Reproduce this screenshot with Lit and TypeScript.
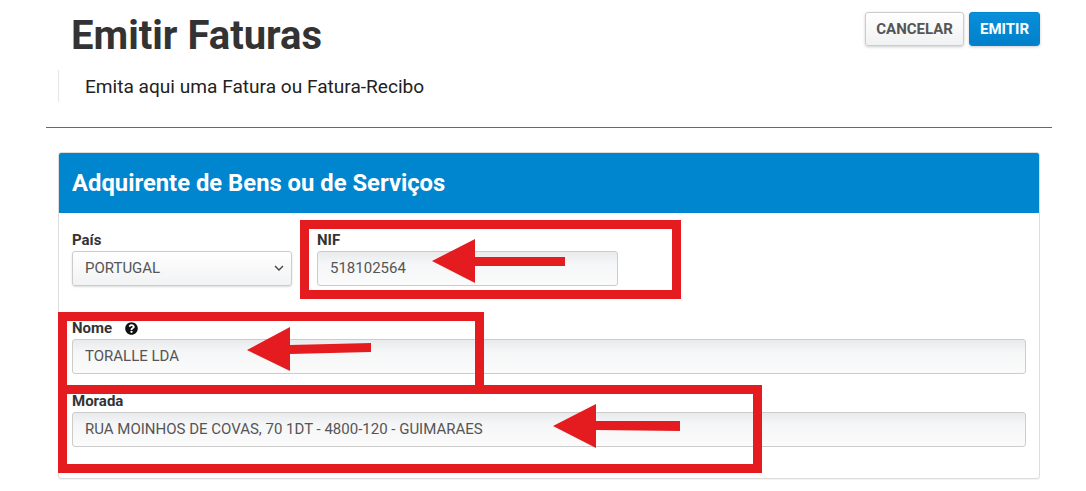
import { LitElement, html, css, svg } from "lit";
import { customElement } from "lit/decorators.js";

// red markers drawn on top of the form: [tip x, tip y, head x, head top, head bottom, tail x, tail top, tail bottom, shaft top at head]
const ARROWS = [
  [432, 261, 475, 239, 283, 565, 257, 266, 257],
  [247, 350, 290, 327, 371, 371, 343, 352, 345],
  [553, 426, 596, 404, 448, 680, 421, 431, 421],
];

@customElement("app-root")
export class AppRoot extends LitElement {
  static styles = css`
    :host {
      display: block;
      font-family: Roboto, "Liberation Sans", sans-serif;
      color: #333;
      background: #fff;
    }
    .page {
      position: relative;
      height: 491px;
      overflow: hidden;
    }
    .top {
      display: flex;
      justify-content: space-between;
      align-items: flex-start;
      padding: 12px 46px 0 71px;
    }
    h1 {
      margin: 1px 0 0;
      font-size: 40px;
      line-height: 46px;
      font-weight: 700;
      color: #333;
    }
    .actions {
      display: flex;
      gap: 5px;
    }
    .btn {
      box-sizing: border-box;
      height: 34px;
      border-radius: 3px;
      font: 700 15px/32px Roboto, "Liberation Sans", sans-serif;
      padding: 0 10px;
      border: 1px solid #ccc;
      background: linear-gradient(#fff, #f0f1f2);
      color: #555;
      box-shadow: 0 1px 3px rgba(0, 0, 0, 0.2);
    }
    .btn.primary {
      border-color: #0085cf;
      background: linear-gradient(#0a8fdb, #0080cb);
      color: #fff;
    }
    .lead {
      margin: 11px 0 0 58px;
      padding-left: 26px;
      height: 32px;
      border-left: 1px solid #e6e6e6;
      font-size: 19.1px;
      line-height: 33px;
      color: #222;
    }
    .rule {
      margin: 25px 34px 0 46px;
      height: 1px;
      background: #0f83c4;
    }
    .card {
      margin: 24px 46px 0 58px;
      border: 1px solid #ddd;
      border-radius: 3px;
      box-shadow: 0 1px 1px rgba(0, 0, 0, 0.05);
      background: #fff;
      overflow: hidden;
    }
    .card-head {
      height: 60px;
      padding-left: 13px;
      background: #0085cf;
      color: #fff;
      font-size: 23.8px;
      line-height: 60px;
      font-weight: 700;
    }
    .card-body {
      display: flex;
      flex-direction: column;
      gap: 19px;
      padding: 19px 13px 31px;
    }
    .row {
      display: flex;
      gap: 25px;
      margin-bottom: 15px;
    }
    .field {
      display: flex;
      flex-direction: column;
      gap: 3px;
      min-width: 0;
    }
    .field.grow {
      flex: 1;
    }
    label {
      display: flex;
      align-items: center;
      gap: 13px;
      font-size: 15px;
      line-height: 16px;
      font-weight: 700;
      color: #333;
    }
    label svg {
      width: 13px;
      height: 13px;
    }
    .input {
      box-sizing: border-box;
      display: flex;
      align-items: center;
      justify-content: space-between;
      height: 35px;
      padding: 0 12px 2px 12px;
      border: 1px solid #ccc;
      border-radius: 3px;
      background: linear-gradient(#e8eaec, #f5f6f7 35%, #fbfbfb);
      font-size: 15px;
      color: #555;
    }
    .input.select {
      background: linear-gradient(#fff, #f1f2f3);
      box-shadow: 0 1px 2px rgba(0, 0, 0, 0.15);
      padding-right: 7px;
    }
    .input svg {
      width: 10px;
      height: 6px;
    }
    .mark {
      position: absolute;
      box-sizing: border-box;
      border: 9px solid #e51c1f;
    }
    .mark.nif {
      left: 300px;
      top: 220px;
      width: 381px;
      height: 79px;
    }
    .mark.nome {
      left: 58px;
      top: 312px;
      width: 426px;
      height: 82px;
    }
    .mark.morada {
      left: 58px;
      top: 385px;
      width: 704px;
      height: 88px;
    }
    .arrows {
      position: absolute;
      inset: 0;
      width: 100%;
      height: 100%;
    }
  `;

  render() {
    return html`
      <div class="page">
        <div class="top">
          <h1>Emitir Faturas</h1>
          <div class="actions">
            <button class="btn">CANCELAR</button>
            <button class="btn primary">EMITIR</button>
          </div>
        </div>
        <div class="lead">Emita aqui uma Fatura ou Fatura-Recibo</div>
        <div class="rule"></div>
        <section class="card">
          <div class="card-head">Adquirente de Bens ou de Serviços</div>
          <div class="card-body">
            <div class="row">
              <div class="field" style="width:220px">
                <label>País</label>
                <div class="input select">
                  PORTUGAL
                  <svg viewBox="0 0 10 6" fill="none" stroke="#444" stroke-width="1.4">
                    <path d="M1 1l4 4 4-4" />
                  </svg>
                </div>
              </div>
              <div class="field" style="width:301px">
                <label>NIF</label>
                <div class="input">518102564</div>
              </div>
            </div>
            <div class="field grow">
              <label>
                Nome
                <svg viewBox="0 0 512 512">
                  <path
                    fill="#111"
                    d="M504 256c0 137-111 248-248 248S8 393 8 256 119 8 256 8s248 111 248 248zM263 90c-54 0-89 23-116 63-4 5-3 12 3 16l35 26c5 4 13 3 17-2 18-23 30-36 57-36 20 0 45 13 45 32 0 15-12 22-32 33-23 13-54 30-54 71v6c0 7 5 12 12 12h56c7 0 12-5 12-12v-2c0-29 84-30 84-108 0-58-61-99-119-99zm-7 250c-26 0-46 21-46 46s20 46 46 46 46-21 46-46-20-46-46-46z"
                  />
                </svg>
              </label>
              <div class="input">TORALLE LDA</div>
            </div>
            <div class="field grow">
              <label>Morada</label>
              <div class="input">RUA MOINHOS DE COVAS, 70 1DT - 4800-120 - GUIMARAES</div>
            </div>
          </div>
        </section>
        <div class="mark nif"></div>
        <div class="mark nome"></div>
        <div class="mark morada"></div>
        <svg class="arrows" viewBox="0 0 1086 491" fill="#e51c1f">
          ${ARROWS.map(
            ([tx, ty, hx, ht, hb, ex, e1, e2, s1]) => svg`
              <polygon points="${tx},${ty} ${hx},${ht} ${hx},${s1} ${ex},${e1} ${ex},${e2} ${hx},${s1 + 9} ${hx},${hb}" />
            `
          )}
        </svg>
      </div>
    `;
  }
}
